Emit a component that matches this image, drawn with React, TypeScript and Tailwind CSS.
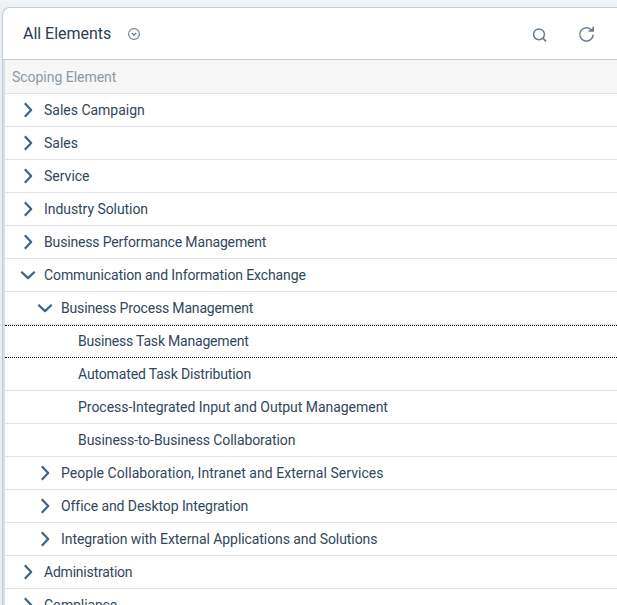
type Item = { label: string; depth: number; state: "open" | "closed" | "leaf"; focused?: boolean; tracking: string };

const items: Item[] = [
  { label: "Sales Campaign", depth: 0, state: "closed", tracking: "tracking-[-0.01px]" },
  { label: "Sales", depth: 0, state: "closed", tracking: "tracking-[0px]" },
  { label: "Service", depth: 0, state: "closed", tracking: "tracking-[0px]" },
  { label: "Industry Solution", depth: 0, state: "closed", tracking: "tracking-[-0.06px]" },
  { label: "Business Performance Management", depth: 0, state: "closed", tracking: "tracking-[-0.155px]" },
  { label: "Communication and Information Exchange", depth: 0, state: "open", tracking: "tracking-[-0.11px]" },
  { label: "Business Process Management", depth: 1, state: "open", tracking: "tracking-[-0.17px]" },
  { label: "Business Task Management", depth: 2, state: "leaf", focused: true, tracking: "tracking-[-0.2px]" },
  { label: "Automated Task Distribution", depth: 2, state: "leaf", tracking: "tracking-[-0.15px]" },
  { label: "Process-Integrated Input and Output Management", depth: 2, state: "leaf", tracking: "tracking-[-0.03px]" },
  { label: "Business-to-Business Collaboration", depth: 2, state: "leaf", tracking: "tracking-[-0.08px]" },
  { label: "People Collaboration, Intranet and External Services", depth: 1, state: "closed", tracking: "tracking-[0.04px]" },
  { label: "Office and Desktop Integration", depth: 1, state: "closed", tracking: "tracking-[-0.08px]" },
  { label: "Integration with External Applications and Solutions", depth: 1, state: "closed", tracking: "tracking-[-0.075px]" },
  { label: "Administration", depth: 0, state: "closed", tracking: "tracking-[-0.22px]" },
  { label: "Compliance", depth: 0, state: "closed", tracking: "tracking-[-0.1px]" },
];

const indents = ["pl-[15px]", "pl-8", "pl-[49px]"];

function Chevron({ open }: { open: boolean }) {
  return (
    <svg width="16" height="16" viewBox="0 0 16 16" fill="none" stroke="#3a648b" strokeWidth="2.2" strokeLinejoin="round">
      <path d={open ? "M1.3 4.8 L8 11.1 L14.7 4.8" : "M4.8 1.3 L11.2 8 L4.8 14.7"} />
    </svg>
  );
}

function Row({ item }: { item: Item }) {
  return (
    <div
      className={`flex h-[33px] shrink-0 items-center ${indents[item.depth]} ${
        item.focused ? "border-y border-dotted border-black pb-px" : "border-b border-[#e1e3e4]"
      }`}
    >
      <span className="flex w-4 justify-center">{item.state !== "leaf" && <Chevron open={item.state === "open"} />}</span>
      <span className={`ml-2 whitespace-nowrap text-sm leading-5 ${item.tracking}`}>{item.label}</span>
    </div>
  );
}

export default function App() {
  return (
    <div className="h-[605px] w-[617px] overflow-hidden bg-gradient-to-b from-[#f4f6f8] to-[#e9eff4] to-[8px] pl-0.5 pt-[7px] font-[Roboto,'Liberation_Sans',sans-serif] text-[#32465c]">
      <div className="flex h-[598px] flex-col overflow-hidden rounded-tl-lg border-l border-t border-[#c5cdd3] bg-white">
        <header className="flex h-[52px] shrink-0 items-center border-b border-[#c4c7c9] pl-5 pr-[21px] text-[#2c3d50]">
          <h1 className="w-[104px] whitespace-nowrap text-base leading-6 tracking-[-0.02px]">All Elements</h1>
          <svg className="h-3.5 w-3.5" viewBox="0 0 14 14" fill="none" stroke="#6f8192">
            <circle cx="7" cy="7" r="5.4" strokeWidth="1.1" />
            <path d="M4.8 6.1 L7 8.1 L9.2 6.1" strokeWidth="1.3" />
          </svg>
          <div className="ml-auto flex items-center gap-[30px]">
            <svg className="mt-0.5 h-4 w-4" viewBox="0 0 16 16" fill="none" stroke="#6a7f95" strokeWidth="1.5">
              <circle cx="7" cy="7.3" r="5.4" />
              <path d="M10.9 11.2 L14 14.3" strokeWidth="1.8" />
            </svg>
            <svg className="h-[18px] w-[18px]" viewBox="0 0 18 18" fill="none" stroke="#6a7f95" strokeWidth="1.5">
              <path d="M15.2 9.6 A6.7 6.7 0 1 1 13.6 5" />
              <path d="M15.3 1.6 V6.1 H10.4 M15.3 3.2 L12.6 6" />
            </svg>
          </div>
        </header>
        <div className="flex min-h-0 flex-1 flex-col overflow-hidden border-l-2 border-[#d9dfe4]">
          <div className="flex h-[34px] shrink-0 items-center border-b border-[#e1e3e4] bg-[#f6f6f6] pl-[7px] text-sm tracking-[-0.03px] text-[#8b99a7]">Scoping Element</div>
          {items.map((item) => (
            <Row key={item.label} item={item} />
          ))}
        </div>
      </div>
    </div>
  );
}
